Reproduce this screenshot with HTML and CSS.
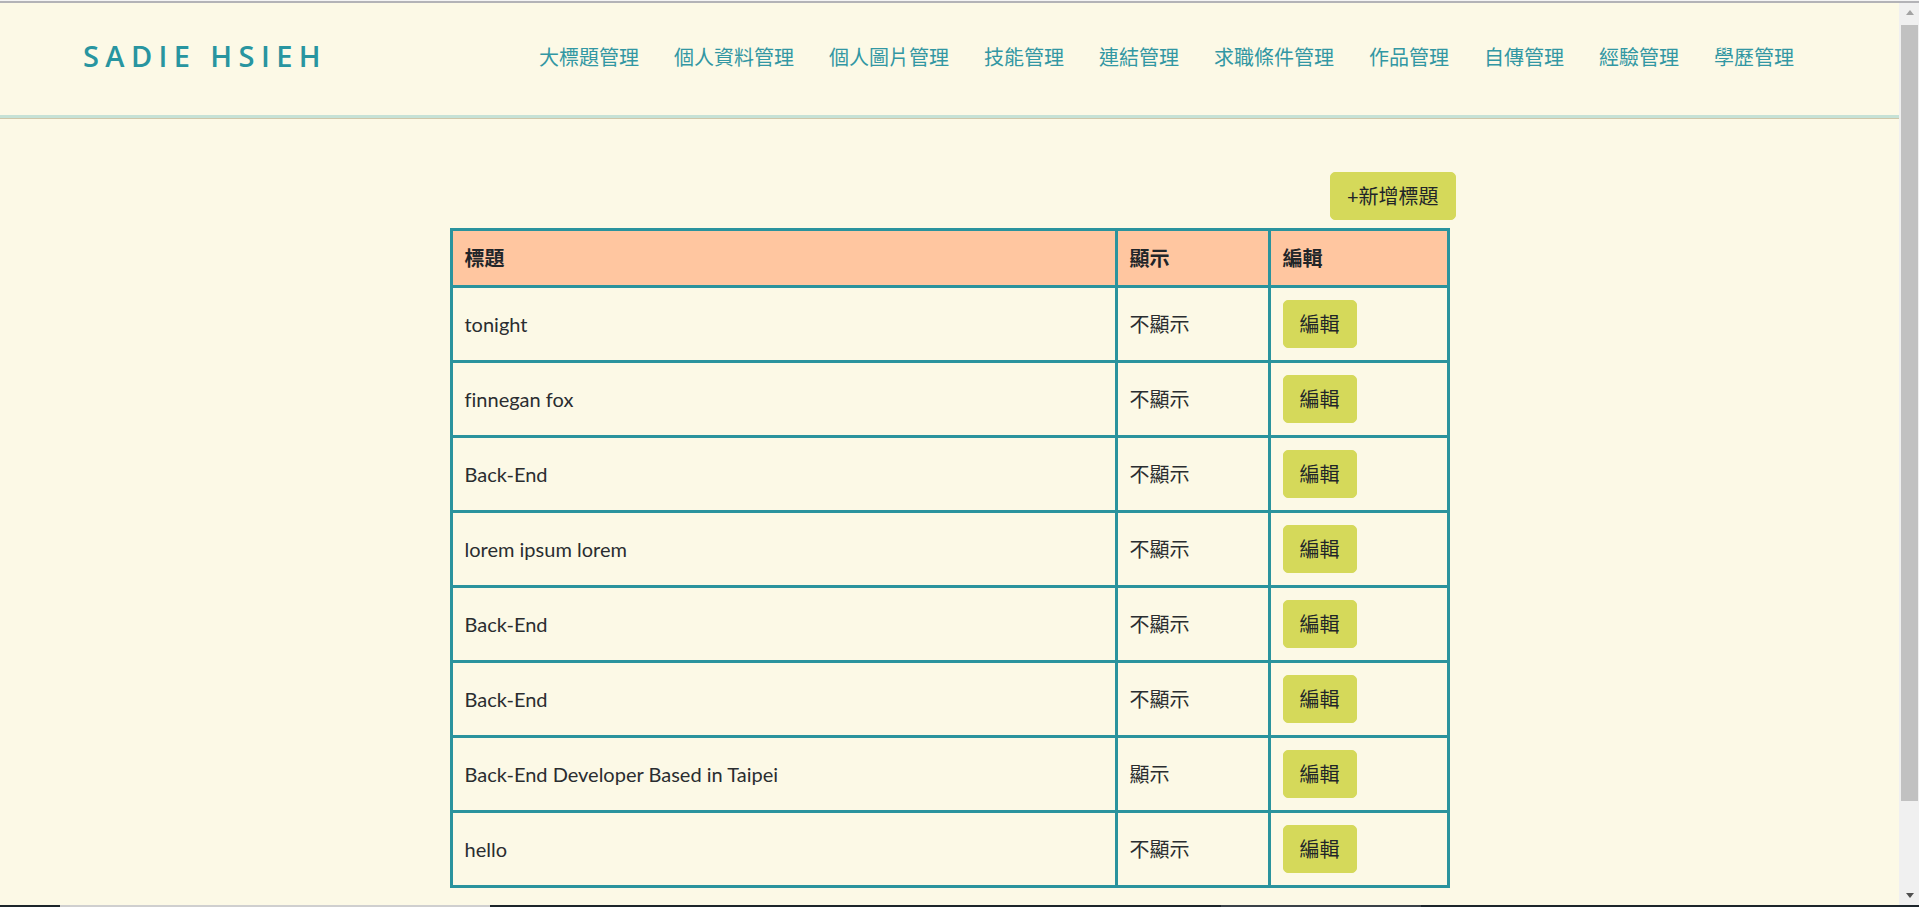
FILE: index.html
```html
<!DOCTYPE html>
<html lang="zh-Hant">
<head>
<meta charset="utf-8">
<title>Sadie Hsieh - 大標題管理</title>
<link rel="stylesheet" href="styles.css">
</head>
<body>
<div class="screen">
  <div class="chrome-top"></div>
  <div class="viewport">
    <div class="page">
      <header class="site-header">
        <div class="logo">SADIE HSIEH</div>
        <nav class="nav">
          <a class="nav-link">大標題管理</a>
          <a class="nav-link">個人資料管理</a>
          <a class="nav-link">個人圖片管理</a>
          <a class="nav-link">技能管理</a>
          <a class="nav-link">連結管理</a>
          <a class="nav-link">求職條件管理</a>
          <a class="nav-link">作品管理</a>
          <a class="nav-link">自傳管理</a>
          <a class="nav-link">經驗管理</a>
          <a class="nav-link">學歷管理</a>
        </nav>
      </header>
      <main class="content">
        <div class="toolbar">
          <button class="btn btn-add">+新增標題</button>
        </div>
        <table class="data-table">
          <thead>
            <tr>
              <th class="col-title">標題</th>
              <th class="col-show">顯示</th>
              <th class="col-edit">編輯</th>
            </tr>
          </thead>
          <tbody>
            <tr><td>tonight</td><td>不顯示</td><td><button class="btn">編輯</button></td></tr>
            <tr><td>finnegan fox</td><td>不顯示</td><td><button class="btn">編輯</button></td></tr>
            <tr><td>Back-End</td><td>不顯示</td><td><button class="btn">編輯</button></td></tr>
            <tr><td>lorem ipsum lorem</td><td>不顯示</td><td><button class="btn">編輯</button></td></tr>
            <tr><td>Back-End</td><td>不顯示</td><td><button class="btn">編輯</button></td></tr>
            <tr><td>Back-End</td><td>不顯示</td><td><button class="btn">編輯</button></td></tr>
            <tr><td>Back-End Developer Based in Taipei</td><td>顯示</td><td><button class="btn">編輯</button></td></tr>
            <tr><td>hello</td><td>不顯示</td><td><button class="btn">編輯</button></td></tr>
          </tbody>
        </table>
      </main>
    </div>
    <div class="scrollbar">
      <div class="sb-btn"><span class="sb-arrow up"></span></div>
      <div class="sb-track"><div class="sb-thumb"></div></div>
      <div class="sb-btn"><span class="sb-arrow down"></span></div>
    </div>
  </div>
  <div class="taskbar">
    <span class="tb-seg tb-dark s1"></span>
    <span class="tb-seg tb-light s2"></span>
    <span class="tb-seg tb-dark s3"></span>
    <span class="tb-seg tb-mid s4"></span>
    <span class="tb-seg tb-dark s5"></span>
  </div>
</div>
</body>
</html>
```

FILE: styles.css
```css
* { box-sizing: border-box; }

html, body {
  margin: 0;
  padding: 0;
  height: 907px;
  overflow: hidden;
}

body {
  font-family: "Lato", "Noto Sans CJK TC", sans-serif;
  font-size: 20px;
  line-height: 1.5;
  color: #212529;
  background: #fcf9e6;
  font-variant-ligatures: none;
}

.screen {
  display: flex;
  flex-direction: column;
  height: 907px;
}

.chrome-top {
  height: 3px;
  flex: none;
  border-top: 1px solid #f4f4f4;
  background: #b3b3b7;
}

.viewport {
  flex: 1;
  display: flex;
  min-height: 0;
}

.page {
  flex: 1;
  min-width: 0;
  overflow: hidden;
  background: #fcf9e6;
}

/* header */
.site-header {
  height: 115px;
  display: flex;
  align-items: center;
  justify-content: space-between;
  padding: 0 105px 4px 83px;
  background: #fcf9e6;
  border-bottom: 3px solid #c6e2d6;
  box-shadow: 0 1px 0 #cfc7a9;
}

.logo {
  font-family: "Open Sans", sans-serif;
  font-weight: 600;
  font-size: 29px;
  letter-spacing: 6.4px;
  color: #2895a0;
  line-height: 1;
  padding-bottom: 4px;
}

.nav {
  display: flex;
  gap: 35px;
}

.nav-link {
  font-family: "Noto Sans CJK TC", sans-serif;
  font-size: 20px;
  line-height: 1.5;
  color: #3297a3;
  text-decoration: none;
}

/* content */
.content {
  width: 1000px;
  margin: 54px auto 0;
}

.toolbar {
  display: flex;
  justify-content: flex-end;
  margin-right: -6px;
  margin-bottom: 8px;
}

.btn {
  font-family: "Lato", "Noto Sans CJK TC", sans-serif;
  font-size: 20px;
  line-height: 1.5;
  color: #212529;
  background: #d5d95a;
  border: 1px solid #d5d95a;
  border-radius: 5px;
  padding: 8px 16px;
  cursor: pointer;
}

.data-table {
  width: 1000px;
  table-layout: fixed;
  border-collapse: separate;
  border-spacing: 0;
  border-top: 3px solid #2a939d;
  border-left: 3px solid #2a939d;
}

.data-table th,
.data-table td {
  border-right: 3px solid #2a939d;
  border-bottom: 3px solid #2a939d;
  padding: 12px;
  text-align: left;
  vertical-align: middle;
}

.data-table td {
  height: 75px;
  color: #2a2d30;
}

.data-table th {
  background: #ffc6a0;
  font-weight: 700;
  font-family: "Noto Sans CJK TC", sans-serif;
}

.col-show { width: 153px; }
.col-edit { width: 179px; }

/* scrollbar */
.scrollbar {
  width: 20px;
  flex: none;
  display: flex;
  flex-direction: column;
  background: #f0f0f0;
  padding-left: 2px;
  padding-right: 1px;
}

.sb-btn {
  height: 19px;
  flex: none;
  display: flex;
  align-items: center;
  justify-content: center;
}

.sb-track {
  flex: 1;
  padding: 3px 0 85px;
}

.sb-thumb {
  height: 100%;
  background: #c1c1c1;
}

.sb-arrow {
  width: 0;
  height: 0;
  border-left: 4.5px solid transparent;
  border-right: 4.5px solid transparent;
}

.sb-arrow.up {
  border-bottom: 5px solid #a3a3a3;
}

.sb-arrow.down {
  border-top: 5px solid #505050;
}

/* taskbar */
.taskbar {
  height: 2px;
  flex: none;
  display: flex;
}

.tb-seg { display: block; height: 2px; }
.tb-dark { background: #1c252b; }
.tb-light { background: #cfcfcf; }
.tb-mid { background: #3a4248; }
.s1 { width: 60px; }
.s2 { width: 430px; }
.s3 { width: 731px; }
.s4 { width: 200px; }
.s5 { flex: 1; }
```
